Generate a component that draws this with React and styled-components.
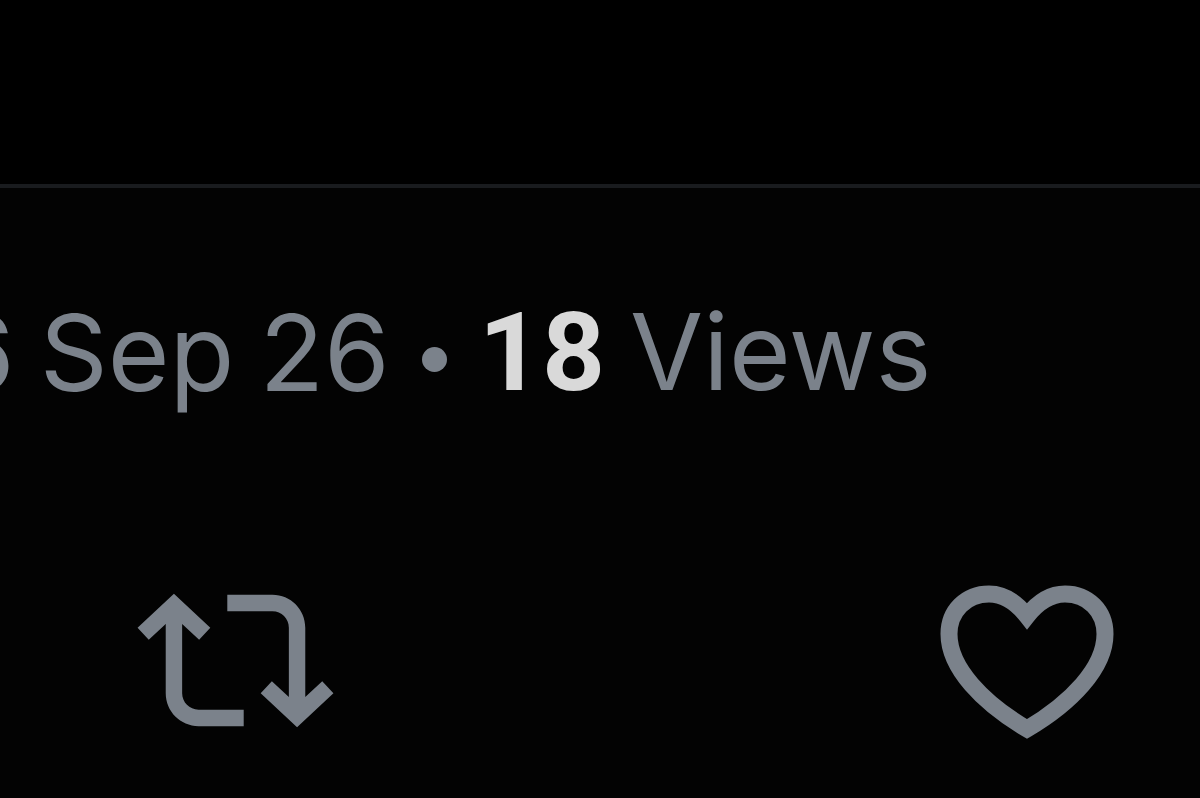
import React from 'react';
import styled, { createGlobalStyle } from 'styled-components';

const GlobalStyle = createGlobalStyle`
  * { box-sizing: border-box; }
  body {
    margin: 0;
    background: #030303;
    font-family: Inter, "Liberation Sans", sans-serif;
  }
`;

const Post = styled.article`
  overflow: hidden;
  min-height: 100vh;
`;

const Media = styled.div`
  height: 184px;
  background: #000;
`;

const Details = styled.footer`
  border-top: 4px solid #191b1e;
`;

const Meta = styled.div`
  display: flex;
  align-items: center;
  gap: 32px;
  margin: 100px 0 0 -51px;
  font-size: 106px;
  line-height: 128px;
  color: #7b828b;
  white-space: nowrap;
`;

const DateText = styled.time`
  display: flex;
  gap: 25px;
`;

const Dot = styled.span`
  width: 25px;
  height: 25px;
  border-radius: 50%;
  background: currentColor;
  margin-top: 14px;
`;

const Views = styled.a`
  display: flex;
  align-items: baseline;
  gap: 25px;
  color: inherit;
  text-decoration: none;
`;

const Count = styled.strong`
  font-family: Roboto, sans-serif;
  font-size: 110px;
  font-weight: 700;
  color: #d9d9d9;
`;

const Actions = styled.div`
  display: flex;
  justify-content: space-between;
  margin-top: 145px;
  padding: 0 74px 36px 137px;
`;

const ActionButton = styled.button`
  display: flex;
  padding: 0;
  border: 0;
  background: none;
  color: #7b828b;
  cursor: pointer;
`;

const Icon = styled.svg`
  display: block;
  width: 197px;
  height: 197px;
`;

export default function App() {
  return (
    <>
      <GlobalStyle />
      <Post>
        <Media />
        <Details>
          <Meta>
            <DateText>
              <span>6</span>
              <span>Sep</span>
              <span>26</span>
            </DateText>
            <Dot aria-hidden="true" />
            <Views href="#views">
              <Count>18</Count>
              <span>Views</span>
            </Views>
          </Meta>
          <Actions>
            <ActionButton type="button" aria-label="Repost">
              <Icon viewBox="0 0 24 24" fill="currentColor" aria-hidden="true">
                <path d="M4.5 3.88l4.432 4.14-1.364 1.46L5.5 7.55V16c0 1.1.896 2 2 2H13v2H7.5c-2.209 0-4-1.79-4-4V7.55L1.432 9.48.068 8.02 4.5 3.88zM16.5 6H11V4h5.5c2.209 0 4 1.79 4 4v8.45l2.068-1.93 1.364 1.46-4.432 4.14-4.432-4.14 1.364-1.46 2.068 1.93V8c0-1.1-.896-2-2-2z" />
              </Icon>
            </ActionButton>
            <ActionButton type="button" aria-label="Like">
              <Icon
                viewBox="0 0 197 197"
                fill="none"
                stroke="currentColor"
                strokeWidth="17"
                strokeLinejoin="miter"
                aria-hidden="true"
              >
                <path d="M98 54C87 40 74 32 60 32C37 32 20 49 20 72C20 106 54 141 98 167C142 141 176 106 176 72C176 49 159 32 136 32C122 32 109 40 98 54Z" />
              </Icon>
            </ActionButton>
          </Actions>
        </Details>
      </Post>
    </>
  );
}
